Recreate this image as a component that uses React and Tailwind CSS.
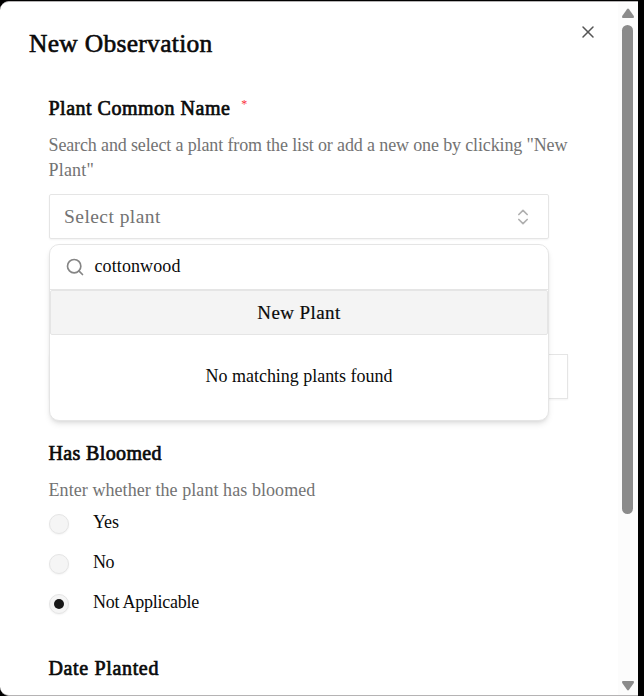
import { ChevronsUpDown, Search, X } from "lucide-react";

const heading =
  "-ml-[0.5px] text-[20px] leading-7 font-normal [-webkit-text-stroke:0.7px_#0a0a0a] whitespace-nowrap";
const body = "text-[18px] leading-[25px] whitespace-nowrap";

function Radio({ label, checked, spacing }) {
  return (
    <label className="flex h-5 items-center">
      <span
        role="radio"
        aria-checked={checked}
        className="mt-[3px] flex size-5 shrink-0 items-center justify-center rounded-full border border-[#e5e5e5] bg-[#f5f5f5] shadow-xs"
      >
        {checked && <span className="size-[10px] rounded-full bg-[#171717]" />}
      </span>
      <span className={`ml-6 ${body} ${spacing}`}>{label}</span>
    </label>
  );
}

function Scrollbar() {
  return (
    <div className="flex w-5 shrink-0 flex-col items-center bg-[#fcfcfc] pr-px">
      <svg className="mt-[5px] h-[11px] w-[14px] shrink-0" viewBox="0 0 14 11" fill="#8b8b8b">
        <path d="M6 1.2Q7 0 8 1.2L12.8 8Q13.6 10 12 10H2Q.4 10 1.2 8Z" />
      </svg>
      <div className="mt-[6px] h-[489px] w-[11px] shrink-0 rounded-full bg-[#8b8b8b]" />
      <svg className="mt-auto mb-[4px] h-[11px] w-[14px] shrink-0" viewBox="0 0 14 11" fill="#8b8b8b">
        <path d="M6 9.8Q7 11 8 9.8L12.8 3Q13.6 1 12 1H2Q.4 1 1.2 3Z" />
      </svg>
    </div>
  );
}

function PlantPicker() {
  return (
    <div className="relative mt-[11px] h-[45px] w-[500px]">
      <button className="flex size-full items-center justify-between rounded-[2px] border border-[#e5e5e5] bg-white pr-[15px] pl-[14px] shadow-xs">
        <span className="text-[19.5px] leading-6 tracking-[0.45px] text-[#737373]">Select plant</span>
        <ChevronsUpDown className="size-5 text-[#b0b0b0]" strokeWidth={2} />
      </button>
      <div className="absolute top-[50px] left-0 z-10 h-[177px] w-[500px] overflow-hidden rounded-[10px] border border-[#e5e5e5] bg-white shadow-md">
        <div className="flex h-[45px] items-center border-b border-[#e5e5e5] px-[15px]">
          <Search className="size-5 text-[#858585]" strokeWidth={2} />
          <span className={`-mt-[2px] ml-[9.5px] tracking-[0.1px] ${body}`}>cottonwood</span>
        </div>
        <button className="flex h-[45px] w-full items-center justify-center rounded-[2px] border border-[#e5e5e5] bg-[#f4f4f4] pt-px text-[19px] tracking-[0.4px] [-webkit-text-stroke:0.2px_#0a0a0a]">
          New Plant
        </button>
        <div className={`flex h-[83px] items-center justify-center tracking-[-0.03px] ${body}`}>
          No matching plants found
        </div>
      </div>
    </div>
  );
}

export default function App() {
  return (
    <div className="h-[696px] w-[644px] overflow-hidden bg-black pt-px font-['Liberation_Serif',serif] text-[#0a0a0a]">
      <div className="flex h-[695px] w-[638px] overflow-hidden rounded-l-[9px] border-t border-b border-[#b5b3b4] bg-white pt-px">
        <main className="flex w-[618px] flex-col">
          <header className="flex h-[86px] shrink-0 justify-between pt-[24px] pr-5 pl-[29px]">
            <h1 className="mt-px text-[25.5px] leading-8 font-normal tracking-[0.3px] whitespace-nowrap [-webkit-text-stroke:0.6px_#0a0a0a]">
              New Observation
            </h1>
            <X className="-mt-[5px] size-5 text-[#555]" strokeWidth={1.8} />
          </header>
          <form className="flex w-[570px] shrink-0 flex-col pt-[5px] pl-[49px]">
            <div className="flex">
              <h2 className={`tracking-[0.5px] ${heading}`}>Plant Common Name</h2>
              <span className="ml-[11px] text-[12px] leading-5 text-red-500">*</span>
            </div>
            <p className={`mt-[11px] -ml-[0.5px] text-[#737373] ${body}`}>
              <span className="block tracking-[-0.135px]">
                Search and select a plant from the list or add a new one by clicking "New
              </span>
              <span className="block tracking-[0.2px]">Plant"</span>
            </p>
            <PlantPicker />
            <div className="mt-[115px] h-[45px] w-[519px] border border-[#e5e5e5] shadow-xs" />
            <h2 className={`mt-[40px] tracking-[0.36px] ${heading}`}>Has Bloomed</h2>
            <p className={`mt-[11px] -ml-[0.5px] tracking-[0.07px] text-[#737373] ${body}`}>
              Enter whether the plant has bloomed
            </p>
            <div className="mt-[9px] flex flex-col gap-5">
              <Radio label="Yes" spacing="tracking-[-0.1px]" />
              <Radio label="No" spacing="tracking-[-0.5px]" />
              <Radio label="Not Applicable" checked spacing="tracking-[-0.25px]" />
            </div>
            <h2 className={`mt-[42px] tracking-[0.65px] ${heading}`}>Date Planted</h2>
          </form>
        </main>
        <Scrollbar />
      </div>
    </div>
  );
}
